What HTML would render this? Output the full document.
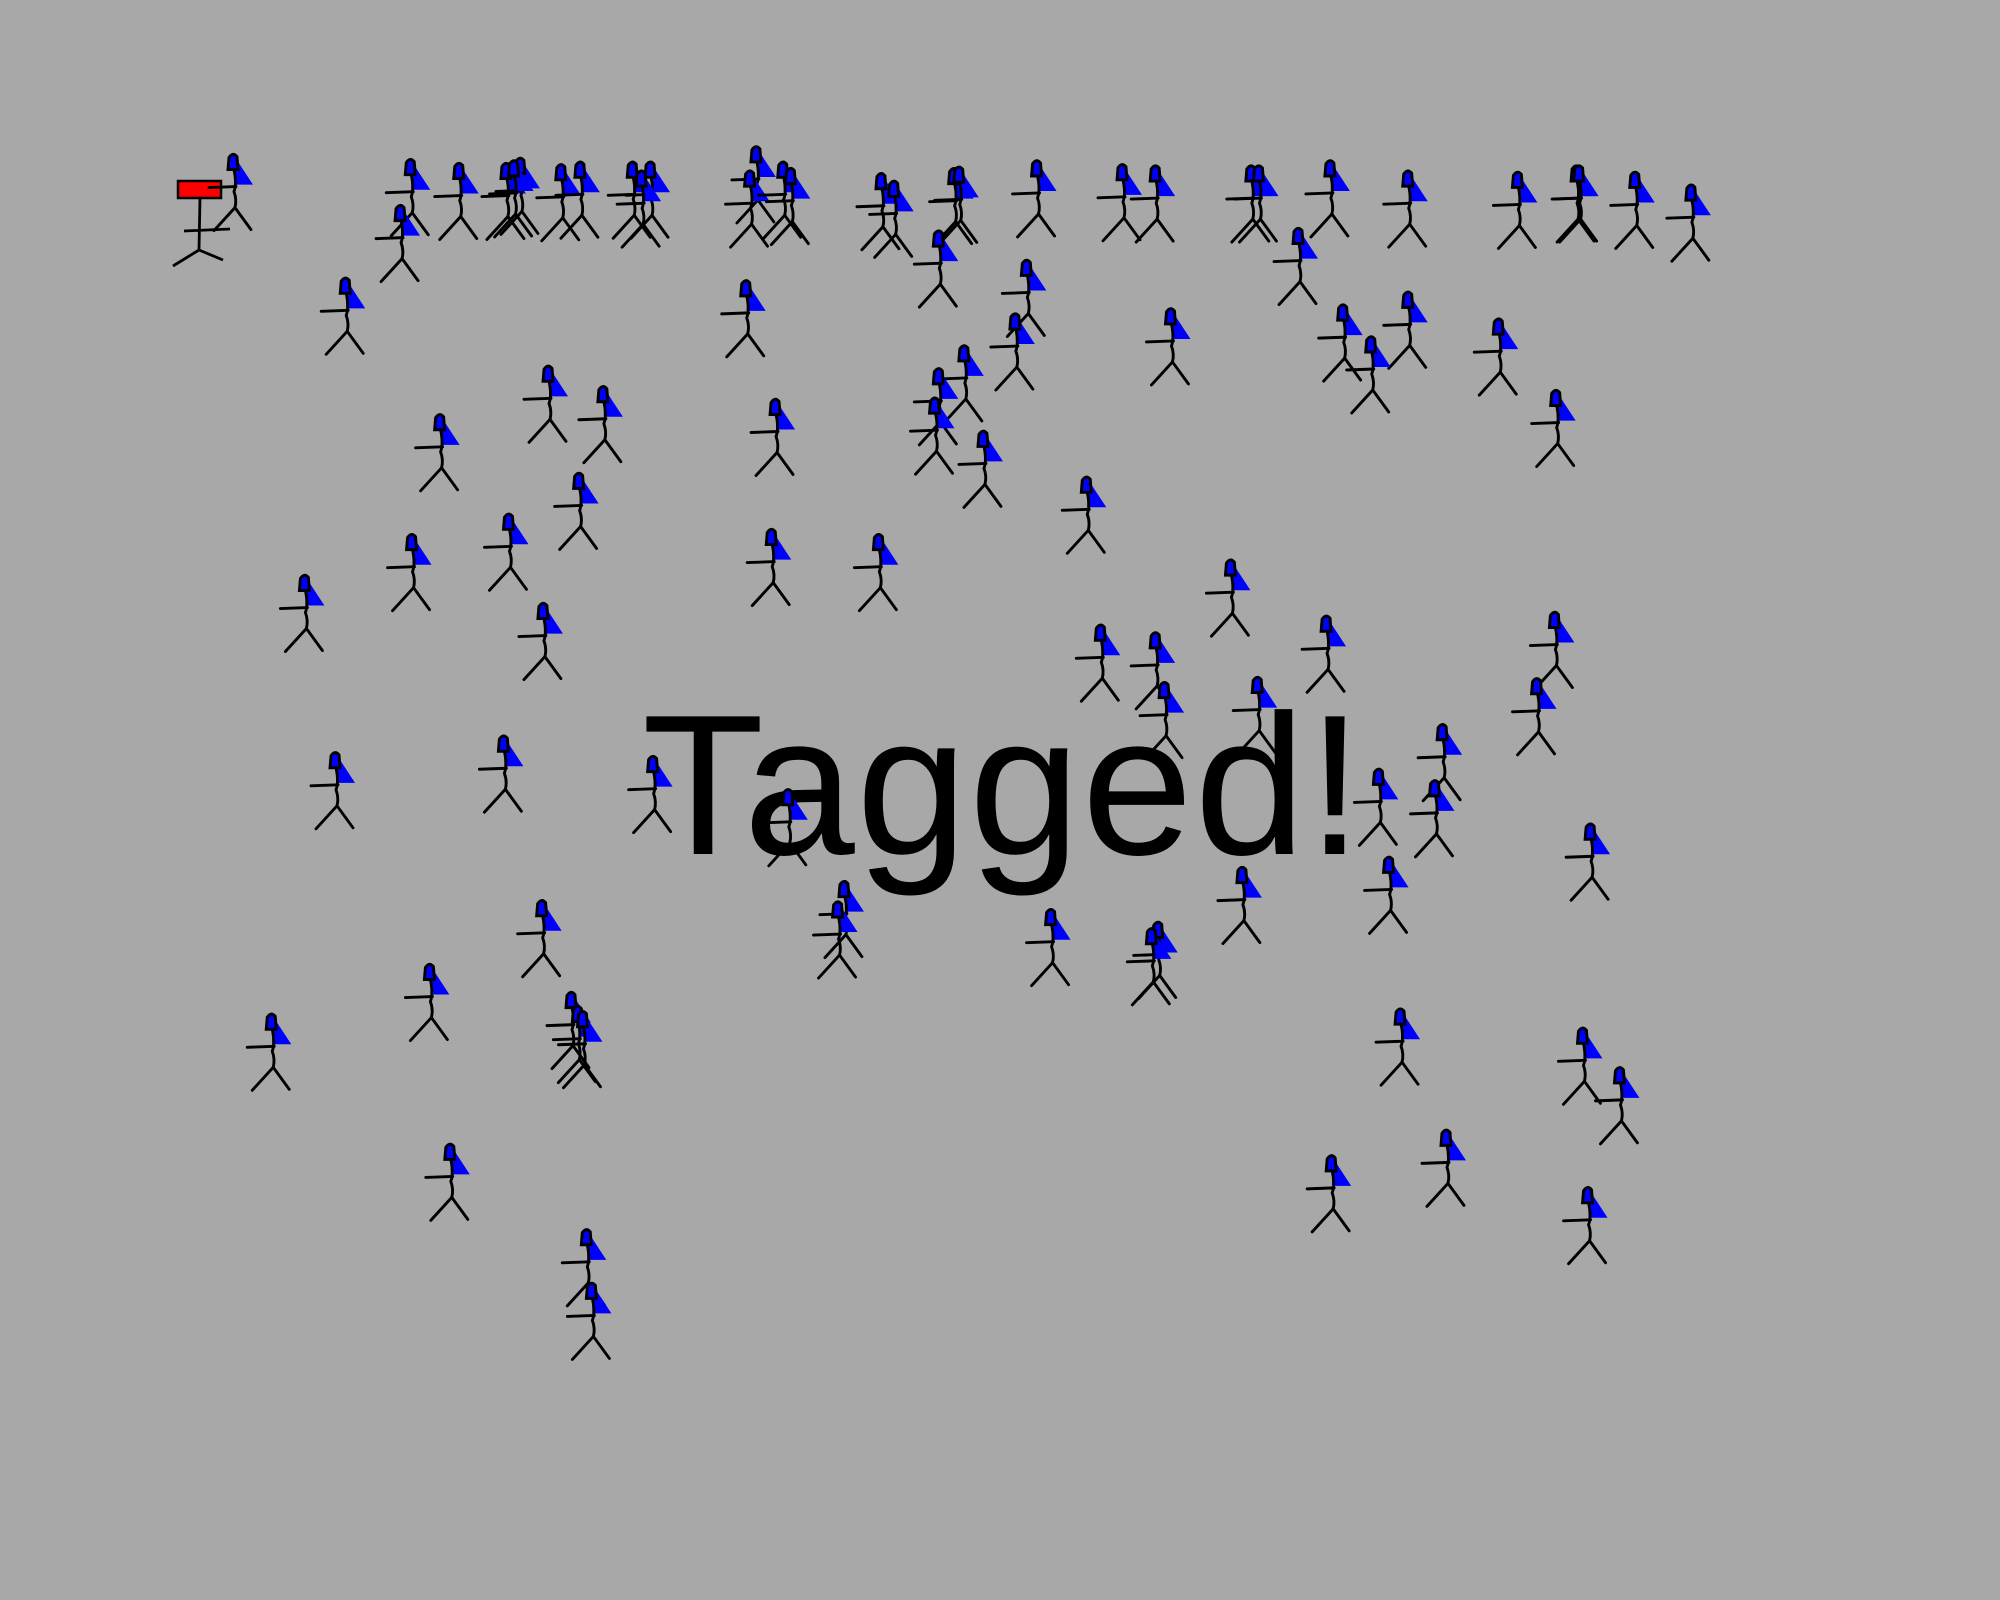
<!DOCTYPE html>
<html><head><meta charset="utf-8"><style>
html,body{margin:0;padding:0;background:#a8a8a8;width:2000px;height:1600px;overflow:hidden}
svg{position:absolute;left:0;top:0}
</style></head><body>
<svg width="2000" height="1600" viewBox="0 0 2000 1600" xmlns="http://www.w3.org/2000/svg">
<defs>
<g id="f" transform="scale(0.784)" stroke="#000" stroke-width="2.9" stroke-linecap="round" fill="none">
<path d="M0,2 L19,31 L0,31 Z" fill="#00f" stroke="none"/>
<path d="M-6,16 L-5,4 Q-1,-2 3,3 L4,16 Z" fill="#00f"/>
<path d="M-25,34 L2,33"/>
<path d="M0,16 Q3,30 0,38 Q3,46 1,54"/>
<path d="M1,54 L-20,77 M1,54 L17,76"/>
</g>
</defs>
<text x="642" y="854" font-family="Liberation Sans, sans-serif" font-size="200" letter-spacing="1.5" fill="#000">Tagged!</text>
<g>
<rect x="178" y="181" width="43" height="17" fill="#f00" stroke="#000" stroke-width="2.5"/>
<path d="M200,198 L199,250 M184,231 L230,229 M199,250 L173,266 M199,250 L223,260" stroke="#000" stroke-width="2.8" fill="none"/>
</g>
<g transform="translate(-2,-2) scale(1.2755)">
<use href="#f" x="185" y="122"/>
<use href="#f" x="324" y="126"/><use href="#f" x="316" y="162"/>
<use href="#f" x="362" y="129"/>
<use href="#f" x="399" y="129"/><use href="#f" x="410" y="125"/><use href="#f" x="405" y="127"/>
<use href="#f" x="442" y="130"/><use href="#f" x="457" y="128"/>
<use href="#f" x="498" y="128"/><use href="#f" x="512" y="128"/><use href="#f" x="505" y="135"/>
<use href="#f" x="595" y="116"/><use href="#f" x="590" y="135"/><use href="#f" x="616" y="128"/><use href="#f" x="622" y="133"/>
<use href="#f" x="693" y="137"/><use href="#f" x="703" y="143"/>
<use href="#f" x="750" y="133"/><use href="#f" x="754" y="132"/>
<use href="#f" x="815" y="127"/>
<use href="#f" x="882" y="130"/><use href="#f" x="908" y="131"/>
<use href="#f" x="983" y="131"/><use href="#f" x="989" y="131"/>
<use href="#f" x="1045" y="127"/>
<use href="#f" x="1106" y="135"/>
<use href="#f" x="1192" y="136"/>
<use href="#f" x="1238" y="131"/><use href="#f" x="1240" y="131"/>
<use href="#f" x="1284" y="136"/>
<use href="#f" x="1328" y="146"/>
<use href="#f" x="1020" y="180"/>
<use href="#f" x="738" y="182"/>
<use href="#f" x="807" y="205"/>
<use href="#f" x="273" y="219"/>
<use href="#f" x="587" y="221"/>
<use href="#f" x="920" y="243"/>
<use href="#f" x="1055" y="240"/><use href="#f" x="1106" y="230"/><use href="#f" x="1077" y="265"/>
<use href="#f" x="1177" y="251"/>
<use href="#f" x="798" y="247"/>
<use href="#f" x="758" y="272"/>
<use href="#f" x="738" y="290"/><use href="#f" x="735" y="313"/>
<use href="#f" x="773" y="339"/>
<use href="#f" x="432" y="288"/><use href="#f" x="475" y="304"/>
<use href="#f" x="347" y="326"/>
<use href="#f" x="610" y="314"/>
<use href="#f" x="1222" y="307"/>
<use href="#f" x="456" y="372"/>
<use href="#f" x="854" y="375"/>
<use href="#f" x="401" y="404"/>
<use href="#f" x="325" y="420"/>
<use href="#f" x="607" y="416"/>
<use href="#f" x="691" y="420"/>
<use href="#f" x="241" y="452"/>
<use href="#f" x="967" y="440"/>
<use href="#f" x="428" y="474"/>
<use href="#f" x="865" y="491"/>
<use href="#f" x="908" y="497"/><use href="#f" x="915" y="536"/>
<use href="#f" x="1042" y="484"/>
<use href="#f" x="1221" y="481"/><use href="#f" x="1207" y="533"/>
<use href="#f" x="988" y="532"/>
<use href="#f" x="1133" y="569"/>
<use href="#f" x="1083" y="604"/><use href="#f" x="1127" y="613"/>
<use href="#f" x="265" y="591"/>
<use href="#f" x="397" y="578"/>
<use href="#f" x="514" y="594"/>
<use href="#f" x="620" y="620"/>
<use href="#f" x="1249" y="647"/>
<use href="#f" x="1091" y="673"/>
<use href="#f" x="976" y="681"/>
<use href="#f" x="664" y="692"/><use href="#f" x="659" y="708"/>
<use href="#f" x="427" y="707"/>
<use href="#f" x="826" y="714"/>
<use href="#f" x="910" y="724"/><use href="#f" x="905" y="729"/>
<use href="#f" x="339" y="757"/>
<use href="#f" x="215" y="796"/>
<use href="#f" x="450" y="779"/><use href="#f" x="455" y="790"/><use href="#f" x="459" y="794"/>
<use href="#f" x="1100" y="792"/>
<use href="#f" x="1243" y="807"/><use href="#f" x="1272" y="838"/>
<use href="#f" x="355" y="898"/>
<use href="#f" x="1046" y="907"/>
<use href="#f" x="1136" y="887"/>
<use href="#f" x="1247" y="932"/>
<use href="#f" x="462" y="965"/><use href="#f" x="466" y="1007"/>
</g>
</svg>
</body></html>
